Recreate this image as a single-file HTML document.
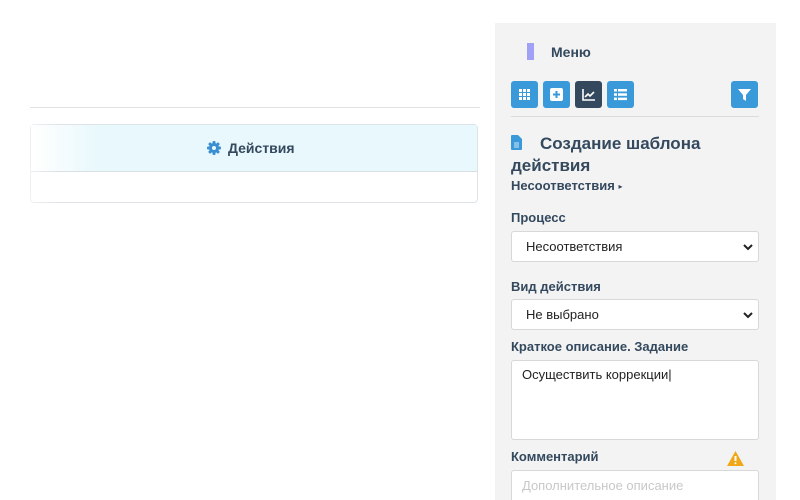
<!DOCTYPE html>
<html><head><meta charset="utf-8"><style>
*{box-sizing:border-box;margin:0;padding:0}
html,body{width:800px;height:500px;overflow:hidden}
body{background:#fff;font-family:"Liberation Sans","DejaVu Sans",sans-serif;color:#34495e;position:relative}
.abs{position:absolute}
.panel{left:495px;top:23px;width:281px;height:477px;background:#f3f3f3}
.btn{position:absolute;top:81px;width:27px;height:27px;border-radius:3px;background:#3a9ad9}
.lbl{position:absolute;left:511px;font-size:13px;font-weight:bold;color:#34495e}
.inp{position:absolute;left:511px;width:248px;background:#fff;border:1px solid #d8d8d8;border-radius:3px;font-size:13px;color:#222;padding-left:14px}
.chev{position:absolute;right:5px;top:11px}
</style></head><body>
<div class="abs" style="left:30px;top:107px;width:450px;height:1px;background:#e2e2e2"></div>
<div class="abs" style="left:30px;top:124px;width:448px;height:79px;border:1px solid #dde3e6;border-radius:4px;background:#fff"></div>
<div class="abs" style="left:31px;top:125px;width:446px;height:47px;background:linear-gradient(90deg,#fff 0,#e8f8fc 70px,#e8f8fc);border-bottom:1px solid #d8e0e3"></div>
<div class="abs" style="left:0;top:120px;width:60px;height:90px;background:linear-gradient(90deg,#fff,rgba(255,255,255,0))"></div>
<svg class="abs" style="left:207px;top:141px" width="14" height="14" viewBox="0 0 14 14"><g fill="#3a8fd0"><circle cx="7" cy="7" r="5"/><rect x="5.5" y="0" width="3" height="14" rx="1"/><rect x="0" y="5.5" width="14" height="3" rx="1"/><rect x="5.5" y="0" width="3" height="14" rx="1" transform="rotate(45 7 7)"/><rect x="5.5" y="0" width="3" height="14" rx="1" transform="rotate(-45 7 7)"/></g><circle cx="7" cy="7" r="2" fill="#e8f8fc"/></svg>
<div class="abs" style="left:228px;top:140px;font-size:14px;font-weight:bold;color:#34495e">Действия</div>

<div class="abs panel"></div>
<div class="abs" style="left:527px;top:43px;width:7px;height:17px;background:#a0a0f5"></div>
<div class="abs" style="left:551px;top:44px;font-size:14px;font-weight:bold">Меню</div>
<div class="btn" style="left:511px"><svg width="27" height="27"><g fill="#fff"><rect x="8" y="8" width="3" height="3"/><rect x="12" y="8" width="3" height="3"/><rect x="16" y="8" width="3" height="3"/><rect x="8" y="12" width="3" height="3"/><rect x="12" y="12" width="3" height="3"/><rect x="16" y="12" width="3" height="3"/><rect x="8" y="16" width="3" height="3"/><rect x="12" y="16" width="3" height="3"/><rect x="16" y="16" width="3" height="3"/></g></svg></div>
<div class="btn" style="left:543px"><svg width="27" height="27"><rect x="7" y="7" width="13" height="13" rx="2" fill="#fff"/><path d="M13.5 10v7M10 13.5h7" stroke="#3a9ad9" stroke-width="2"/></svg></div>
<div class="btn" style="left:575px;background:#34495e"><svg width="27" height="27"><path d="M8 8v11h12" stroke="#fff" stroke-width="1.6" fill="none"/><path d="M10 16l3-3 2 2 4-4" stroke="#fff" stroke-width="1.6" fill="none"/></svg></div>
<div class="btn" style="left:607px"><svg width="27" height="27"><g fill="#fff"><rect x="7" y="8" width="3" height="2.5"/><rect x="11" y="8" width="9" height="2.5"/><rect x="7" y="12.3" width="3" height="2.5"/><rect x="11" y="12.3" width="9" height="2.5"/><rect x="7" y="16.6" width="3" height="2.5"/><rect x="11" y="16.6" width="9" height="2.5"/></g></svg></div>
<div class="btn" style="left:731px"><svg width="27" height="27"><path d="M7 8h13l-5 6v6l-3-2v-4z" fill="#fff"/></svg></div>
<div class="abs" style="left:511px;top:116px;width:248px;height:1px;background:#dcdcdc"></div>
<svg class="abs" style="left:511px;top:135px" width="11" height="15" viewBox="0 0 11 15"><path d="M0 1a1 1 0 011-1h6l4 4v10a1 1 0 01-1 1H1a1 1 0 01-1-1z" fill="#3a9ad9"/><path d="M3 8h5M3 10h5M3 12h5" stroke="#fff" stroke-width=".8"/></svg>
<div class="abs" style="left:511px;top:133px;font-size:17px;font-weight:bold;line-height:22px;width:250px;text-indent:29px">Создание шаблона действия</div>
<div class="abs" style="left:511px;top:178px;font-size:13px;font-weight:bold">Несоответствия <span style="font-size:8px;vertical-align:1px">▸</span></div>
<div class="lbl" style="top:210px">Процесс</div>
<div class="inp" style="top:231px;height:31px;line-height:29px">Несоответствия<svg class="chev" width="10" height="8"><path d="M1 2l4 4 4-4" stroke="#222" stroke-width="2" fill="none"/></svg></div>
<div class="lbl" style="top:279px">Вид действия</div>
<div class="inp" style="top:299px;height:31px;line-height:29px">Не выбрано<svg class="chev" width="10" height="8"><path d="M1 2l4 4 4-4" stroke="#222" stroke-width="2" fill="none"/></svg></div>
<div class="lbl" style="top:339px">Краткое описание. Задание</div>
<div class="inp" style="top:360px;height:80px;padding-left:10px;padding-top:6px">Осуществить коррекции|</div>
<div class="lbl" style="top:449px">Комментарий</div>
<svg class="abs" style="left:727px;top:451px" width="17" height="15"><path d="M8.5 0L17 15H0z" fill="#f0a818"/><path d="M8.5 5v5" stroke="#fff" stroke-width="2"/><circle cx="8.5" cy="12.3" r="1" fill="#fff"/></svg>
<div class="inp" style="top:470px;height:30px;border-bottom:none;border-radius:3px 3px 0 0;padding-left:10px;padding-top:7px;color:#c8c8c8">Дополнительное описание</div>
</body></html>
